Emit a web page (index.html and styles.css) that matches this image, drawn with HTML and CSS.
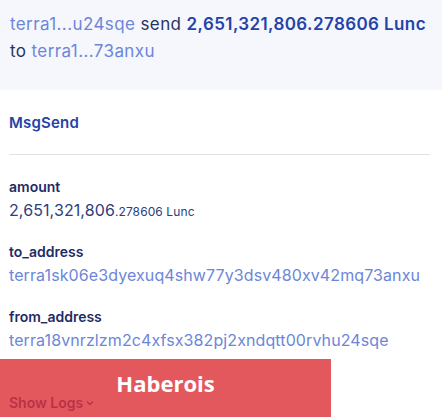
FILE: index.html
```html
<!DOCTYPE html>
<html>
<head>
<meta charset="utf-8">
<link rel="stylesheet" href="styles.css">
</head>
<body>
<div class="page">
  <div class="summary">
    <span class="link">terra1...u24sqe</span> send <strong>2,651,321,806.278606 Lunc</strong> to <span class="link">terra1...73anxu</span>
  </div>
  <div class="msg">
    <div class="msg-title">MsgSend</div>
    <hr class="divider">
    <div class="field">
      <div class="label">amount</div>
      <div class="value">2,651,321,806<small>.278606 Lunc</small></div>
    </div>
    <div class="field">
      <div class="label">to_address</div>
      <div class="value link">terra1sk06e3dyexuq4shw77y3dsv480xv42mq73anxu</div>
    </div>
    <div class="field">
      <div class="label">from_address</div>
      <div class="value link">terra18vnrzlzm2c4xfsx382pj2xndqtt00rvhu24sqe</div>
    </div>
    <div class="logs">Show Logs <svg class="chev" width="8" height="6" viewBox="0 0 8 6"><path d="M1 1.5 L4 4.5 L7 1.5" fill="none" stroke="currentColor" stroke-width="1.3"/></svg></div>
  </div>
  <div class="banner">Haberois</div>
</div>
</body>
</html>
```
FILE: styles.css
```css
html, body {
  margin: 0;
  padding: 0;
  background: #ffffff;
}
body {
  font-family: Inter, "Noto Sans", sans-serif;
  color: #2c3a78;
}
.page {
  position: relative;
  width: 442px;
  height: 418px;
  overflow: hidden;
}
.summary {
  background: #f5f7fd;
  height: 90px;
  box-sizing: border-box;
  padding: 11px 10px 0 10px;
  font-size: 17px;
  line-height: 27px;
  letter-spacing: 0.4px;
  color: #27335f;
}
.summary strong {
  font-weight: 600;
  color: #2443a8;
}
.link {
  color: #6d86d8;
}
.msg {
  padding: 23px 10px 0 9px;
}
.msg-title {
  font-size: 15px;
  line-height: 20px;
  font-weight: 600;
  letter-spacing: 0.2px;
  color: #2443a8;
}
.divider {
  border: 0;
  border-top: 1px solid #e2e2e2;
  margin: 21px 2px 21px 0;
}
.field {
  margin-bottom: 19px;
}
.label {
  font-size: 14px;
  line-height: 22px;
  font-weight: 600;
  color: #1f2b66;
}
.value {
  font-size: 16px;
  line-height: 24px;
  letter-spacing: 0.1px;
  color: #2c3d80;
}
.value small {
  font-size: 12px;
  line-height: 1;
}
.value.link {
  color: #6d86d8;
}
.logs {
  margin-top: 41px;
  font-size: 14px;
  line-height: 20px;
  font-weight: 600;
  color: #2a3d9a;
  display: flex;
  align-items: center;
  gap: 3px;
}
.banner {
  position: absolute;
  left: 0;
  top: 359px;
  width: 331px;
  height: 58px;
  box-sizing: border-box;
  padding-top: 11px;
  background: rgba(220, 46, 52, 0.8);
  color: #ffffff;
  font-family: "Open Sans", sans-serif;
  font-weight: 700;
  font-size: 22px;
  line-height: 26px;
  text-align: center;
}
```
